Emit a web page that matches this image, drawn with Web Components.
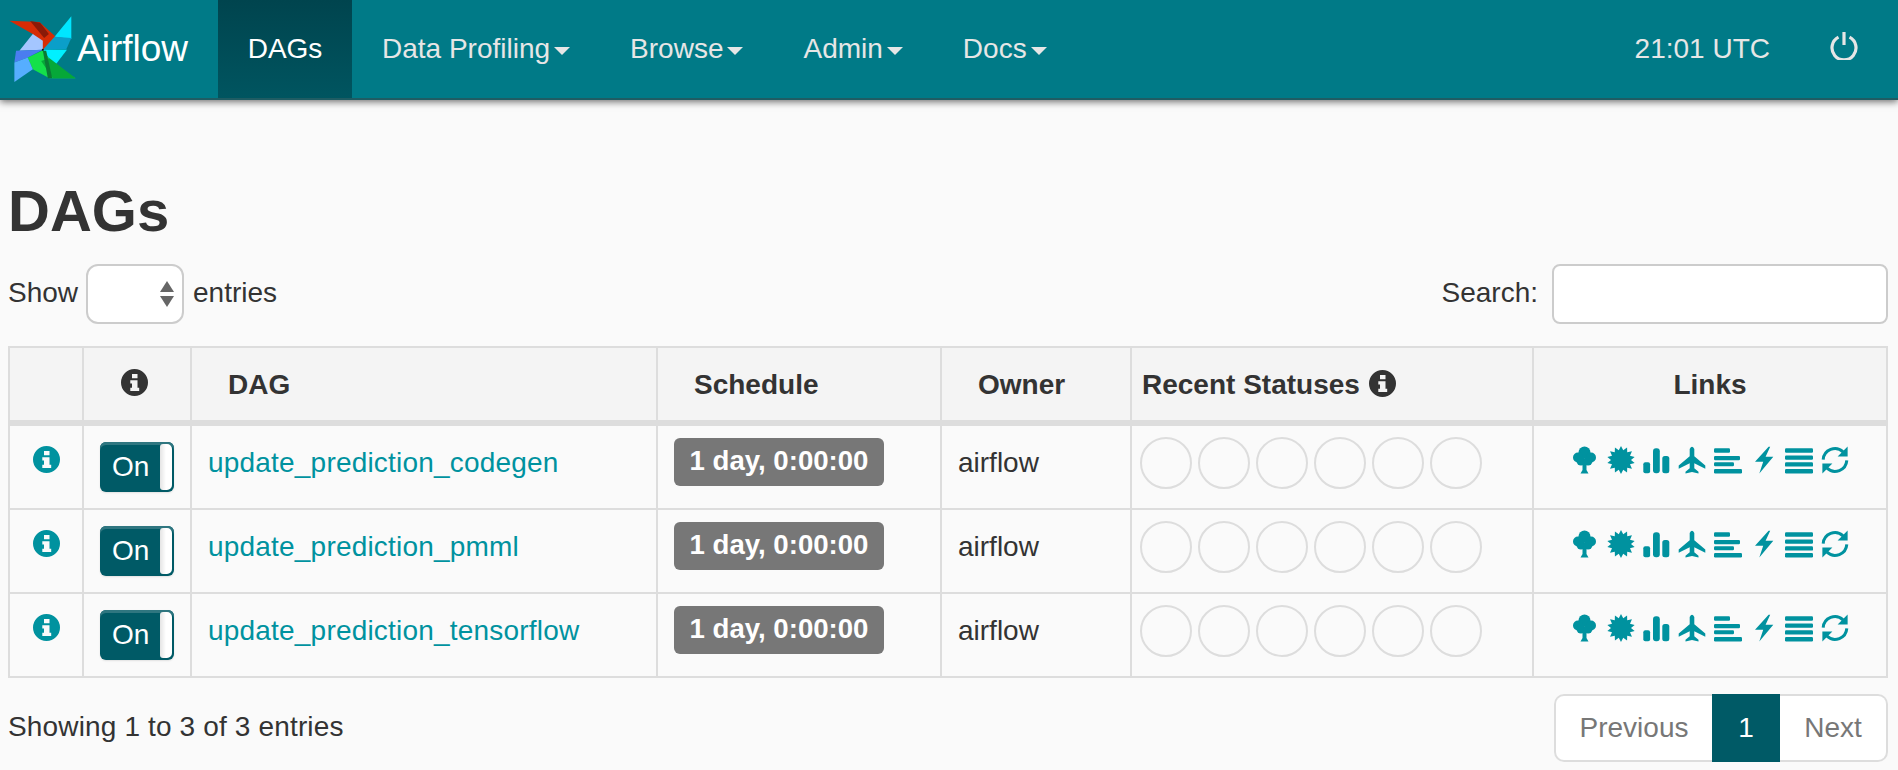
<!DOCTYPE html>
<html>
<head>
<meta charset="utf-8">
<title>Airflow - DAGs</title>
<style>
  html, body { margin: 0; padding: 0; background: #fafafa; }
  body { font-family: "Liberation Sans", Arial, sans-serif; font-size: 28px; color: #333; }
</style>
</head>
<body>
<air-navbar></air-navbar>
<dag-page></dag-page>

<script>
const INFO_PATH = "M13.5 0a13.5 13.5 0 1 0 0 27a13.5 13.5 0 1 0 0-27zM11 5h5.5v4.2H11zM9.3 11.3H16.5V18.8H18.2V22H9.3V18.8H11V14.5H9.3z";

// draws one of the row / header icons
class AirIcon extends HTMLElement {
  getBurst() {
    let pts = [];
    for (let i = 0; i < 28; i++) {
      const r = i % 2 ? 10 : 14;
      const a = Math.PI * i / 14;
      pts.push((14 + r * Math.sin(a)).toFixed(2) + "," + (14 - r * Math.cos(a)).toFixed(2));
    }
    return `<polygon points="${pts.join(" ")}"/>`;
  }

  getGlyph(name) {
    if (name === "tree") {
      return `<circle cx="13.5" cy="6.5" r="6"/><circle cx="7" cy="11.5" r="5"/><circle cx="20" cy="11.5" r="5"/><circle cx="10" cy="15" r="4.5"/><circle cx="17" cy="15" r="4.5"/><path d="M11.5 15H15.5V24L17.5 27.5H9.5L11.5 24z"/>`;
    }
    if (name === "certificate") return this.getBurst();
    if (name === "signal") {
      return `<rect x="1.3" y="16.3" width="6.8" height="11" rx="2"/><rect x="11" y="2.3" width="6.8" height="25" rx="3"/><rect x="20.3" y="10" width="7" height="17.3" rx="2.5"/>`;
    }
    if (name === "plane") {
      return `<path d="M11.7 3Q14 -1.6 16.3 3V10.2L27.3 19.5V22.8L16.3 17.3V22.3L20.5 25.8V27.6L14 26L7.5 27.6V25.8L11.7 22.3V17.3L.7 22.8V19.5L11.7 10.2z"/>`;
    }
    if (name === "align-left") {
      return `<rect y="2.3" width="16" height="4.4" rx="1.2"/><rect y="9.9" width="26" height="4.4" rx="1.2"/><rect y="16.2" width="20" height="4" rx="1.2"/><rect y="23" width="28" height="4.4" rx="1.2"/>`;
    }
    if (name === "flash") {
      return `<path d="M18.6.7L5 15.7H13.2L9.3 27.4L23.3 10.7H15.6L20.2.7z"/>`;
    }
    if (name === "justify") {
      return `<rect y="2.3" width="28" height="4.4" rx="1.2"/><rect y="9.4" width="28" height="4.4" rx="1.2"/><rect y="16.2" width="28" height="4.4" rx="1.2"/><rect y="23" width="28" height="4.4" rx="1.2"/>`;
    }
    if (name === "refresh") {
      return `<path d="M2.2 13.6A11.8 11.8 0 0 1 22 5.8" fill="none" stroke="currentColor" stroke-width="3"/><path d="M26.6 .6V10.6H16.6z"/><path d="M25.8 14.4A11.8 11.8 0 0 1 6 22.2" fill="none" stroke="currentColor" stroke-width="3"/><path d="M1.4 27.4V17.4H11.4z"/>`;
    }
    return "";
  }

  connectedCallback() {
    this.attachShadow({ mode: "open" });
    this.shadowRoot.innerHTML = `
      <style>
        :host { display: block; width: 28px; height: 28px; color: var(--link, #00929f); }
        svg { display: block; fill: currentColor; overflow: visible; }
      </style>
      <svg width="28" height="28" viewBox="0 0 28 28">${this.getGlyph(this.getAttribute("name"))}</svg>
    `;
  }
}

class InfoIcon extends HTMLElement {
  connectedCallback() {
    this.attachShadow({ mode: "open" });
    this.shadowRoot.innerHTML = `
      <style>
        :host { display: inline-block; width: 27px; height: 27px; color: inherit; }
        svg { display: block; fill: currentColor; }
      </style>
      <svg width="27" height="27" viewBox="0 0 27 27"><path fill-rule="evenodd" d="${INFO_PATH}"/></svg>
    `;
  }
}

class AirNavbar extends HTMLElement {
  connectedCallback() {
    this.attachShadow({ mode: "open" });
    const items = ["Data Profiling", "Browse", "Admin", "Docs"];
    this.shadowRoot.innerHTML = `
      <style>
        :host {
          display: flex;
          box-sizing: border-box;
          height: 100px;
          background: #007a87;
          border-bottom: 2px solid #1f5c63;
          box-shadow: 0 2px 7px rgba(0, 0, 0, .55);
          color: #e6e6e6;
          font-size: 28px;
          position: relative;
        }
        .brand {
          display: flex;
          align-items: center;
          width: 218px;
          padding-left: 9px;
          box-sizing: border-box;
          color: #fff;
          font-size: 37px;
          flex: none;
        }
        .brand svg { display: block; width: 67px; height: 67px; margin-right: 1px; flex: none; }
        .active {
          display: flex;
          align-items: center;
          width: 134px;
          justify-content: center;
          color: #fff;
          background: linear-gradient(#00444e, #005560);
          flex: none;
        }
        .item { display: flex; align-items: center; padding: 0 30px; flex: none; }
        .item:first-of-type { padding-left: 28px; }
        .item:last-of-type { padding-left: 31px; }
        .caret {
          margin-left: 4px;
          margin-top: 3px;
          width: 0;
          height: 0;
          border-top: 8px solid currentColor;
          border-left: 8px solid transparent;
          border-right: 8px solid transparent;
        }
        .right { margin-left: auto; display: flex; align-items: center; }
        .time { margin-right: 60px; }
        .off { margin-right: 40px; margin-top: -6px; display: block; }
      </style>
      <div class="brand">
        <svg viewBox="29 46 200 200">
          <path fill="#d62c06" d="M30 60L120 64L176 115L160 135L130 147L100 100z"/>
          <path fill="#8a1a08" d="M92 61L122 66L148 100L134 112z"/>
          <path fill="#00e6ff" d="M215 47V115L165 108z"/>
          <path fill="#0b9fc9" d="M130 147L165 108L215 112L200 145z"/>
          <path fill="#00f0ff" d="M130 147H202L165 195z"/>
          <path fill="#14e04a" d="M85 170L130 148L165 195L228 232H150L100 205z"/>
          <path fill="#06a838" d="M125 180L150 172L228 232H160z"/>
          <path fill="#0a7a34" d="M130 150L145 232H158L140 150z"/>
          <path fill="#a4c6ff" d="M100 100L130 120V147L60 150z"/>
          <path fill="#4a7df0" d="M50 150L130 147L85 170L45 185z"/>
          <path fill="#56aeff" d="M45 185L85 170L100 205L45 243z"/>
          <circle cx="130" cy="147" r="3" fill="#111"/>
        </svg>
        <span>Airflow</span>
      </div>
      <div class="active">DAGs</div>
      ${items.map(t => `<div class="item">${t}<span class="caret"></span></div>`).join("")}
      <div class="right">
        <span class="time">21:01 UTC</span>
        <svg class="off" width="28" height="28" viewBox="0 0 28 28" fill="none" stroke="#e6e6e6" stroke-width="3.2">
          <path d="M8.5 5.2A12 12 0 1 0 19.5 5.2"/>
          <path d="M14 0V13"/>
        </svg>
      </div>
    `;
  }
}

class DagToolbar extends HTMLElement {
  connectedCallback() {
    this.attachShadow({ mode: "open" });
    this.shadowRoot.innerHTML = `
      <style>
        :host { display: flex; justify-content: space-between; align-items: center; height: 60px; }
        .group { display: flex; align-items: center; }
        .group span { margin-top: -2px; }
        .select {
          box-sizing: border-box;
          width: 98px;
          height: 60px;
          margin: 0 9px 0 8px;
          border: 2px solid #ccc;
          border-radius: 12px;
          background: #fff;
          display: flex;
          align-items: center;
          justify-content: flex-end;
          padding-right: 8px;
        }
        .input {
          box-sizing: border-box;
          width: 336px;
          height: 60px;
          margin-left: 14px;
          border: 2px solid #ccc;
          border-radius: 8px;
          background: #fff;
        }
      </style>
      <div class="group">
        <span>Show</span>
        <div class="select">
          <svg width="14" height="26" viewBox="0 0 14 26" fill="#666"><path d="M7 0L14 11H0z"/><path d="M0 15H14L7 26z"/></svg>
        </div>
        <span>entries</span>
      </div>
      <div class="group">
        <span>Search:</span>
        <div class="input"></div>
      </div>
    `;
  }
}

const COLS = "74px 108px 466px 284px 190px 402px 1fr";

class DagHeader extends HTMLElement {
  connectedCallback() {
    this.attachShadow({ mode: "open" });
    this.shadowRoot.innerHTML = `
      <style>
        :host {
          display: grid;
          grid-template-columns: ${COLS};
          height: 72px;
          background: #f4f4f4;
          border-bottom: 6px solid #ddd;
          font-weight: bold;
        }
        div { border-right: 2px solid #ddd; display: flex; align-items: center; box-sizing: border-box; padding-top: 1px; }
        div:last-child { border-right: 0; justify-content: center; }
        .c { justify-content: center; padding-right: 6px; }
        info-icon { margin-left: 9px; margin-top: -2px; }
        .c info-icon { margin-left: 0; margin-top: -4px; }
      </style>
      <div></div>
      <div class="c"><info-icon></info-icon></div>
      <div style="padding-left:36px">DAG</div>
      <div style="padding-left:36px">Schedule</div>
      <div style="padding-left:36px">Owner</div>
      <div style="padding-left:10px">Recent Statuses<info-icon></info-icon></div>
      <div>Links</div>
    `;
  }
}

class OnToggle extends HTMLElement {
  connectedCallback() {
    this.attachShadow({ mode: "open" });
    this.shadowRoot.innerHTML = `
      <style>
        :host {
          display: flex;
          align-items: center;
          box-sizing: border-box;
          width: 74px;
          height: 50px;
          padding: 2px 2px 2px 12px;
          border-radius: 6px;
          background: #005a66;
          color: #fff;
          box-shadow: inset 0 3px 0 #2f7680, 0 1px 2px rgba(0, 0, 0, .1);
        }
        span { flex: 1; }
        i { display: block; width: 12px; height: 46px; border-radius: 3px 5px 5px 3px; background: linear-gradient(90deg, #e4e4e4, #fff 50%); }
      </style>
      <span>On</span><i></i>
    `;
  }
}

class DagRow extends HTMLElement {
  connectedCallback() {
    this.attachShadow({ mode: "open" });
    const name = this.getAttribute("name");
    const icons = ["tree", "certificate", "signal", "plane", "align-left", "flash", "justify", "refresh"];
    this.shadowRoot.innerHTML = `
      <style>
        :host {
          display: grid;
          grid-template-columns: ${COLS};
          height: 82px;
          border-bottom: 2px solid #ddd;
          line-height: 40px;
        }
        .cell { border-right: 2px solid #ddd; box-sizing: border-box; }
        .cell:last-child { border-right: 0; }
        .info { display: flex; justify-content: center; padding-top: 20px; color: #00929f; }
        .toggle { padding: 16px 0 0 16px; }
        .name { padding: 17px 0 0 16px; color: #00929f; letter-spacing: .2px; }
        .sched { padding: 12px 0 0 16px; }
        .label {
          display: inline-block;
          width: 210px;
          height: 48px;
          line-height: 46px;
          text-align: center;
          border-radius: 6px;
          background: #777;
          color: #fff;
          font-weight: bold;
          font-size: 27.6px;
        }
        .owner { padding: 17px 0 0 16px; }
        .status { display: flex; gap: 6px; padding: 11px 0 0 8px; }
        .status i { display: block; box-sizing: border-box; width: 52px; height: 52px; border: 2px solid #ddd; border-radius: 50%; }
        .links { display: flex; justify-content: center; gap: 7.8px; padding-top: 20px; }
      </style>
      <div class="cell info"><info-icon></info-icon></div>
      <div class="cell toggle"><on-toggle></on-toggle></div>
      <div class="cell name">${name}</div>
      <div class="cell sched"><span class="label">1 day, 0:00:00</span></div>
      <div class="cell owner">airflow</div>
      <div class="cell status">${"<i></i>".repeat(6)}</div>
      <div class="cell links">${icons.map(n => `<air-icon name="${n}"></air-icon>`).join("")}</div>
    `;
  }
}

class DagTable extends HTMLElement {
  connectedCallback() {
    this.attachShadow({ mode: "open" });
    this.shadowRoot.innerHTML = `
      <style>
        :host {
          display: block;
          border: 2px solid #ddd;
          border-bottom: 0;
        }
      </style>
      <slot></slot>
    `;
  }
}

class DagPager extends HTMLElement {
  connectedCallback() {
    this.attachShadow({ mode: "open" });
    this.shadowRoot.innerHTML = `
      <style>
        :host {
          display: flex;
          height: 68px;
          box-sizing: border-box;
          color: #777;
          background: #fff;
          border-radius: 10px;
        }
        div { display: flex; align-items: center; justify-content: center; box-sizing: border-box; border: 2px solid #ddd; }
        .prev { width: 158px; border-right: 0; border-radius: 10px 0 0 10px; }
        .cur { width: 68px; background: #005a66; border: 0; color: #fff; }
        .next { width: 108px; border-left: 0; border-radius: 0 10px 10px 0; }
      </style>
      <div class="prev">Previous</div>
      <div class="cur">1</div>
      <div class="next">Next</div>
    `;
  }
}

class DagPage extends HTMLElement {
  connectedCallback() {
    this.attachShadow({ mode: "open" });
    this.shadowRoot.innerHTML = `
      <style>
        :host { display: block; padding: 83px 10px 0 8px; }
        h1 { margin: 0 0 25px; font-size: 58px; line-height: 56px; font-weight: bold; color: #333; }
        dag-toolbar { margin-bottom: 22px; }
        .foot { display: flex; justify-content: space-between; align-items: center; margin-top: 16px; }
        .foot span { letter-spacing: .15px; margin-top: -2px; }
      </style>
      <h1>DAGs</h1>
      <dag-toolbar></dag-toolbar>
      <dag-table>
        <dag-header></dag-header>
        <dag-row name="update_prediction_codegen"></dag-row>
        <dag-row name="update_prediction_pmml"></dag-row>
        <dag-row name="update_prediction_tensorflow"></dag-row>
      </dag-table>
      <div class="foot">
        <span>Showing 1 to 3 of 3 entries</span>
        <dag-pager></dag-pager>
      </div>
    `;
  }
}

customElements.define("air-icon", AirIcon);
customElements.define("info-icon", InfoIcon);
customElements.define("air-navbar", AirNavbar);
customElements.define("dag-toolbar", DagToolbar);
customElements.define("dag-header", DagHeader);
customElements.define("on-toggle", OnToggle);
customElements.define("dag-row", DagRow);
customElements.define("dag-table", DagTable);
customElements.define("dag-pager", DagPager);
customElements.define("dag-page", DagPage);
</script>
</body>
</html>
